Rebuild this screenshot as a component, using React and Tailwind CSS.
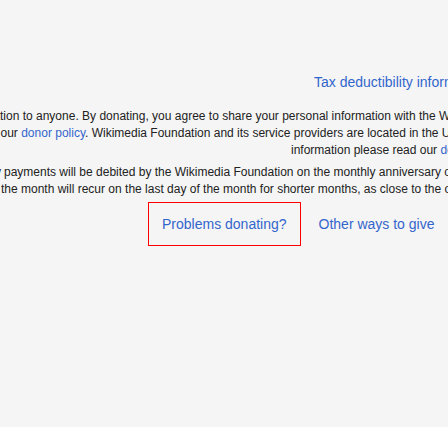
export default function App() {
  return (
    <div className="w-[448px] h-[448px] overflow-hidden bg-white font-['Liberation_Sans',Arial,sans-serif]">
      <div className="h-[427px] bg-[#f5f5f5] overflow-hidden pt-[72px]">
        <div className="pl-[314px] whitespace-nowrap text-[14px] leading-[20px] text-[#3366cc]">
          Tax deductibility information
        </div>

        <div className="mt-[16.4px] text-[12px] leading-[16.8px] text-[#222222]">
          <div className="flex whitespace-nowrap">
            <span className="flex w-0 shrink-0 justify-end">We do not sell or trade your informa</span>
            <span>tion to anyone. By donating, you agree to share your personal information with the Wikimedia Foundation, the nonprofit organization that hosts Wikipedia and other Wikimedia projects, and its service providers</span>
          </div>
          <div className="flex whitespace-nowrap pl-[0.5px]">
            <span className="flex w-0 shrink-0 justify-end ml-[-3px] mr-[3px]">pursuant to y</span>
            <span>
              our <span className="text-[#3366cc]">donor policy</span>. Wikimedia Foundation and its service providers are located in the United States and in other countries whose privacy laws may not be equivalent to your own. For more
            </span>
          </div>
          <div className="whitespace-nowrap pl-[291px]">
            information please read our <span className="text-[#3366cc]">donor policy</span>.
          </div>
        </div>

        <div className="mt-[5px] text-[12px] leading-[16.8px] text-[#222222]">
          <div className="flex whitespace-nowrap pl-[1px]">
            <span className="flex w-0 shrink-0 justify-end">For recurring donors, fixed monthly</span>
            <span className="pl-[3px]">payments will be debited by the Wikimedia Foundation on the monthly anniversary of the first donation, until such time as you notify us to discontinue them.</span>
          </div>
          <div className="flex whitespace-nowrap pl-[1px]">
            <span className="flex w-0 shrink-0 justify-end ml-[-3px] mr-[3px]">Donations initiated on the 29, 30, or 31 of</span>
            <span>the month will recur on the last day of the month for shorter months, as close to the original date as possible.</span>
          </div>
        </div>

        <div className="mt-[4.5px] flex gap-[4px] pl-[148px] whitespace-nowrap text-[14px] leading-[20px] text-[#3366cc]">
          <a className="block border border-[#ff0000] px-[13px] py-[11px]">Problems donating?</a>
          <a className="block border border-transparent px-[13px] py-[11px]">Other ways to give</a>
        </div>
      </div>
    </div>
  );
}
